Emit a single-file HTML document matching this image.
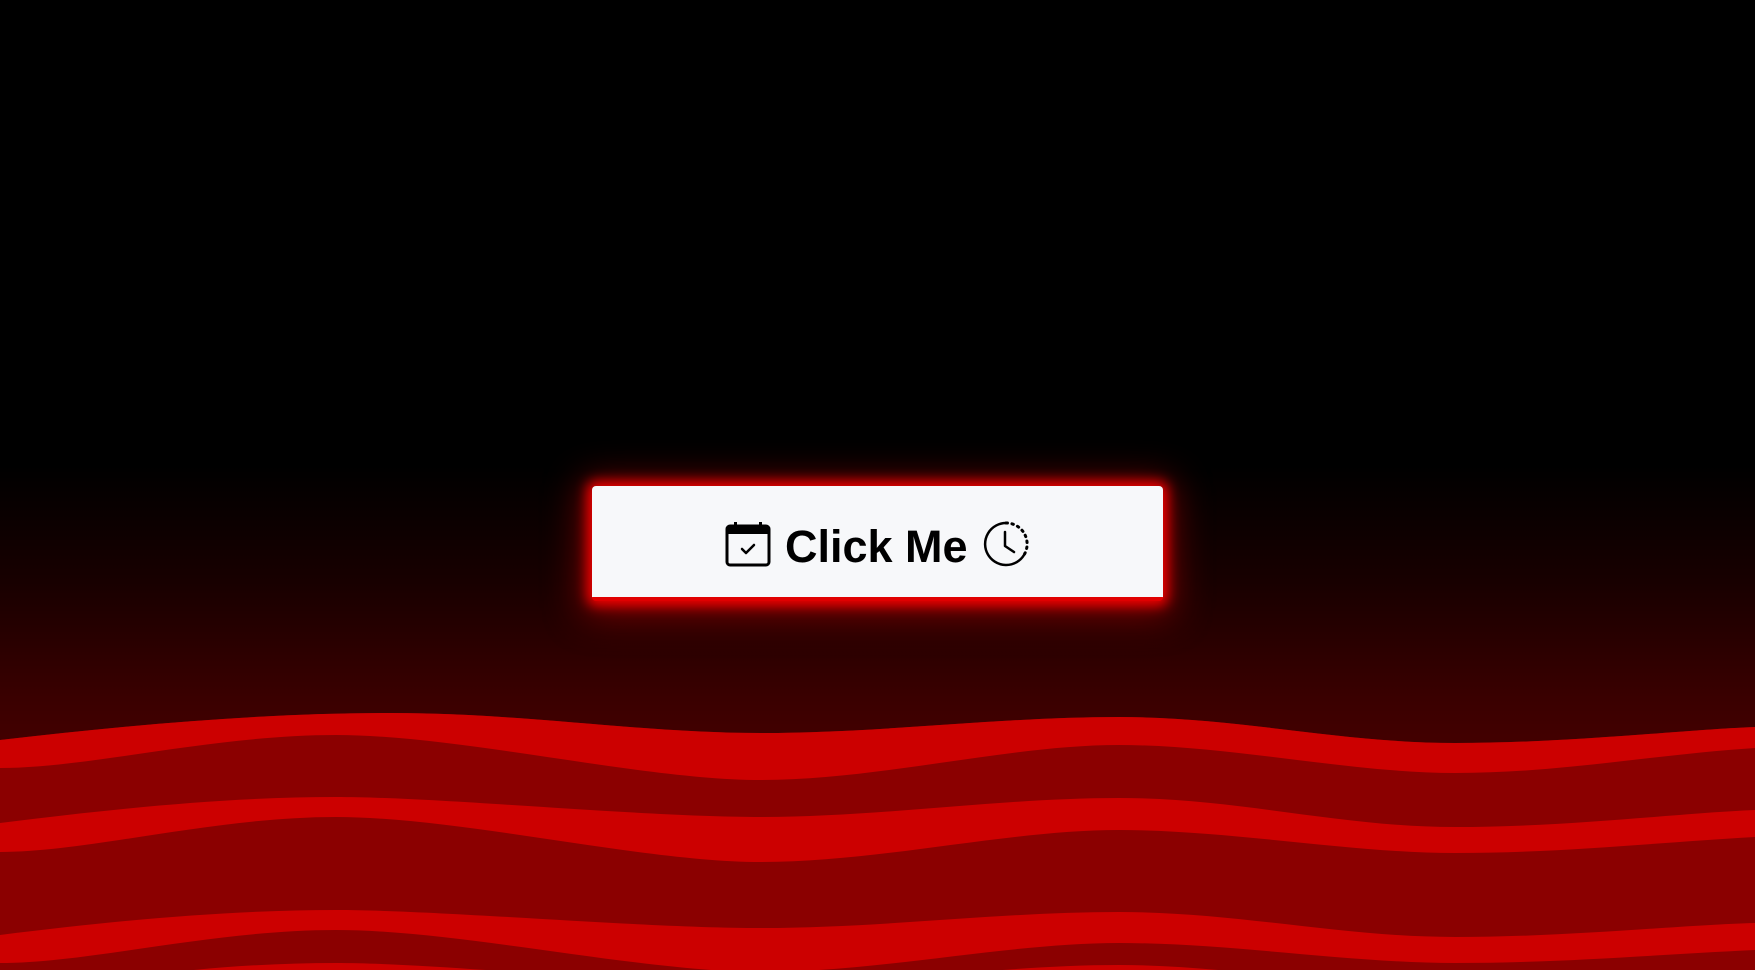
<!DOCTYPE html>
<html><head><meta charset="utf-8"><style>
html,body{margin:0;padding:0;width:1755px;height:970px;overflow:hidden;background:#000}
svg.bg{position:absolute;left:0;top:0}
.btn{position:absolute;left:592px;top:486px;width:571px;height:111px;background:#f7f8fa;border-radius:4px;border-bottom:4px solid #e00000;box-shadow:0 0 12px 5px rgba(255,0,0,.9),0 4px 36px 10px rgba(200,0,0,.55)}
.txt{position:absolute;left:785px;top:522px;font:bold 45px "Liberation Sans",sans-serif;color:#000;line-height:50px;white-space:nowrap}
</style></head><body>
<svg class="bg" width="1755" height="970" viewBox="0 0 1755 970">
<defs><linearGradient id="g" x1="0" y1="0" x2="0" y2="1">
<stop offset="0" stop-color="#000"/><stop offset="0.48" stop-color="#000"/><stop offset="0.6" stop-color="#180000"/><stop offset="0.72" stop-color="#3a0000"/><stop offset="0.76" stop-color="#420000"/><stop offset="1" stop-color="#420000"/></linearGradient></defs>
<rect width="1755" height="970" fill="url(#g)"/>
<path fill="#8b0000" d="M0,740 C130,725 260,713 392,713 S640,733 761,733 S1000,717 1119,717 S1340,743 1455,743 S1680,730 1755,727 L1755,970 L0,970Z"/>
<path fill="#cc0000" d="M0,740 C130,725 260,713 392,713 S640,733 761,733 S1000,717 1119,717 S1340,743 1455,743 S1680,730 1755,727 L1755,748 C1650,755 1560,773 1455,773 S1230,745 1119,745 S880,780 761,780 S460,735 336,735 S90,768 0,768Z"/>
<path fill="#cc0000" d="M0,823 C120,808 230,797 336,797 S640,817 761,817 S1000,798 1119,798 S1340,827 1455,827 S1680,813 1755,810 L1755,837 C1650,843 1560,853 1455,853 S1230,830 1119,830 S880,862 761,862 S460,817 336,817 S90,852 0,852Z"/>
<path fill="#cc0000" d="M0,935 C120,920 230,910 336,910 S640,928 761,928 S1000,912 1119,912 S1340,937 1455,937 S1680,925 1755,923 L1755,950 C1650,955 1560,963 1455,963 S1230,943 1119,943 S880,972 761,972 S460,930 336,930 S90,963 0,963Z"/>
<path fill="#cc0000" d="M0,1000 C120,975 230,963 336,963 S640,985 761,985 S1000,965 1119,965 S1340,990 1455,990 S1680,980 1755,978 L1755,1010 L0,1010Z"/>
</svg>
<div class="btn"></div>
<svg style="position:absolute;left:725px;top:521px" width="46" height="46" viewBox="0 0 46 46">
<rect x="2" y="5" width="42" height="39" rx="3" fill="none" stroke="#000" stroke-width="3"/>
<rect x="2" y="5" width="42" height="8" fill="#000"/>
<rect x="9" y="1" width="3" height="7" fill="#000"/><rect x="34" y="1" width="3" height="7" fill="#000"/>
<path d="M17 28 l4 4 l8 -8" fill="none" stroke="#000" stroke-width="2.5" stroke-linecap="round" stroke-linejoin="round"/>
</svg>
<div class="txt">Click Me</div>
<svg style="position:absolute;left:983px;top:521px" width="46" height="46" viewBox="0 0 46 46">
<path d="M23 2 A21 21 0 1 0 41 34" fill="none" stroke="#000" stroke-width="2.5"/>
<path d="M23 2 A21 21 0 0 1 41 34" fill="none" stroke="#000" stroke-width="3" stroke-dasharray="1.5 4.5" stroke-linecap="round"/>
<path d="M22 11 V25 L31 31" fill="none" stroke="#000" stroke-width="2.5" stroke-linecap="round" stroke-linejoin="round"/>
</svg>
</body></html>
